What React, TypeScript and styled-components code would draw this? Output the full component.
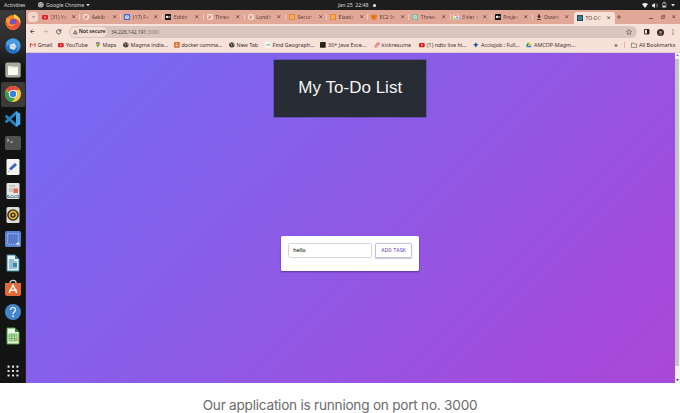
import React from "react";
import styled, { createGlobalStyle } from "styled-components";

const Global = createGlobalStyle`
  * { box-sizing: border-box; }
  body { margin: 0; background: #fff; overflow: hidden; font-family: "Noto Sans", "Open Sans", sans-serif; }
  svg { display: block; flex: none; overflow: visible; }
`;

const Figure = styled.div`
  width: 680px;
  height: 413px;
  display: flex;
  flex-direction: column;
`;
const Desktop = styled.div`
  height: 383px;
  display: flex;
  flex-direction: column;
  overflow: hidden;
`;
const SystemBar = styled.div`
  height: 10px;
  flex: none;
  display: grid;
  grid-template-columns: 334px 1fr auto;
  align-items: center;
  padding: 0 5px 0 4px;
  background: #1d1d1d;
  color: #d6d6d6;
  font-size: 5.3px;
  line-height: 10px;
  letter-spacing: -0.08px;
`;
const BarGroup = styled.div<{ $gap: number }>`
  display: flex;
  align-items: center;
  gap: ${(p) => p.$gap}px;
  white-space: pre;
`;
const AppName = styled(BarGroup)`
  margin-left: 11px;
`;
const Workspace = styled.div`
  flex: 1;
  min-height: 0;
  display: flex;
`;
const Dock = styled.div`
  width: 26px;
  flex: none;
  display: flex;
  flex-direction: column;
  background: linear-gradient(#3b3b3c 0, #2b2b2c 35px, #111212 60px, #141414 100%);
  border-right: 1px solid #242128;
`;
const DockItem = styled.div<{ $active?: boolean; $last?: boolean }>`
  height: 24.15px;
  flex: none;
  width: 24px;
  margin-left: 1px;
  margin-top: ${(p) => (p.$last ? 10.5 : 0)}px;
  display: flex;
  align-items: center;
  justify-content: center;
  border-radius: 2px;
  background: ${(p) => (p.$active ? "#3c3b3a" : "transparent")};
`;
const Browser = styled.div`
  flex: 1;
  min-width: 0;
  display: flex;
  flex-direction: column;
`;
const TabStrip = styled.div`
  height: 14px;
  flex: none;
  display: flex;
  align-items: center;
  background: #e1a797;
  padding-left: 2px;
  color: #5b3f38;
`;
const TabSearch = styled.div`
  width: 10px;
  height: 10px;
  flex: none;
  border-radius: 3px;
  background: #f3d5ca;
  display: flex;
  align-items: center;
  justify-content: center;
  margin-right: 1.3px;
`;
const TabItem = styled.div<{ $active?: boolean }>`
  width: 41.15px;
  height: ${(p) => (p.$active ? "12px" : "14px")};
  align-self: flex-end;
  flex: none;
  display: flex;
  align-items: center;
  padding: 0 0 0 2.7px;
  padding-bottom: ${(p) => (p.$active ? 1 : 0)}px;
  border-radius: 3px 3px 0 0;
  background: ${(p) => (p.$active ? "#f7e2d9" : "transparent")};
`;
const TabTitle = styled.span`
  width: 21.2px;
  margin-left: 2.6px;
  flex: none;
  overflow: hidden;
  white-space: pre;
  font-size: 5.2px;
  line-height: 8px;
  -webkit-mask-image: linear-gradient(90deg, #000 50%, transparent 82%);
  mask-image: linear-gradient(90deg, #000 50%, transparent 82%);
`;
const TabDivider = styled.i`
  width: 0.8px;
  height: 6px;
  margin-left: auto;
  margin-right: 0.3px;
  background: #f0cabf;
`;
const WindowControls = styled.div`
  flex: 1;
  display: flex;
  align-items: center;
  justify-content: space-between;
  padding: 0 4.5px 0 2.2px;
`;
const ControlGroup = styled.div`
  display: flex;
  align-items: center;
  gap: 7.5px;
`;
const Toolbar = styled.div`
  height: 15px;
  flex: none;
  display: flex;
  align-items: center;
  padding: 1px 5px 0 4px;
  background: #f7e2d9;
`;
const NavButtons = styled.div`
  display: flex;
  gap: 8px;
  width: 39px;
`;
const Omnibox = styled.div`
  width: 568px;
  height: 11.6px;
  border-radius: 6px;
  background: #d8c6be;
  display: flex;
  align-items: center;
  padding: 0 5px 0 1px;
  color: #554a46;
  font-size: 5.3px;
  line-height: 9px;
  letter-spacing: -0.16px;
`;
const SecurityChip = styled.div`
  width: 37px;
  height: 9.4px;
  border-radius: 5px;
  background: #f2ded5;
  display: flex;
  align-items: center;
  gap: 1.7px;
  padding-left: 2.5px;
  margin-right: 3.9px;
  color: #2c2523;
  font-weight: 600;
  font-size: 5.2px;
  letter-spacing: -0.08px;
  white-space: nowrap;
`;
const Port = styled.span`
  color: #8f807a;
  flex: 1;
`;
const ToolbarActions = styled.div`
  flex: 1;
  display: flex;
  align-items: center;
  justify-content: space-between;
  padding: 0 1px 0 7px;
`;
const Bookmarks = styled.div`
  height: 13.5px;
  flex: none;
  display: flex;
  align-items: center;
  padding: 0 5px 0 4px;
  background: #f7e2d9;
  border-bottom: 0.8px solid #dccbd0;
  color: #3a302d;
  font-size: 5.4px;
  line-height: 9px;
`;
const Bookmark = styled.div<{ $width: number; $track?: number }>`
  width: ${(p) => p.$width}px;
  flex: none;
  display: flex;
  align-items: center;
  gap: 2px;
  white-space: pre;
  letter-spacing: ${(p) => p.$track ?? 0}px;
`;
const BookmarkTail = styled.div`
  flex: 1;
  display: flex;
  align-items: center;
  justify-content: space-between;
  white-space: nowrap;
`;
const TailDivider = styled.i`
  width: 0.8px;
  height: 6px;
  background: #e3b3a6;
`;
const Viewport = styled.div`
  flex: 1;
  min-height: 0;
  display: flex;
`;
const TodoPage = styled.main`
  width: 648.5px;
  flex: none;
  display: flex;
  flex-direction: column;
  align-items: center;
  background: linear-gradient(135deg, #786bf5 0%, #7b66f0 15%, #8f59e5 52%, #a54adb 88%, #a948d8 100%);
`;
const Heading = styled.h1`
  width: 152px;
  height: 57.2px;
  margin: 7.2px 0 0;
  display: flex;
  align-items: center;
  justify-content: center;
  background: #282c34;
  box-shadow: 0 0 0 0.5px #4d4085;
  color: #f4f4f4;
  font: 400 17px/20px "Liberation Sans", Arial, sans-serif;
  letter-spacing: 0.02px;
`;
const TaskCard = styled.section`
  width: 138px;
  height: 35px;
  margin-top: 119px;
  padding: 7px 7px 0;
  display: flex;
  align-items: flex-start;
  gap: 3.5px;
  background: #fff;
  border-radius: 1.6px;
  box-shadow: 0 1px 2px rgba(50, 20, 90, 0.55);
`;
const TaskInput = styled.div`
  width: 83.5px;
  height: 14.8px;
  border: 0.8px solid #d6d6da;
  border-radius: 1.8px;
  padding-left: 4px;
  color: #222;
  font-size: 5.3px;
  font-weight: 500;
  line-height: 13px;
  letter-spacing: -0.05px;
`;
const AddButton = styled.button`
  flex: 1;
  height: 14.8px;
  padding: 0;
  border: 0.8px solid #c8bddd;
  border-radius: 1.5px;
  background: #fff;
  box-shadow: 0 0.5px 1.2px #cbc6d6;
  color: #6a3fb8;
  font: 400 5.1px/13px Roboto, sans-serif;
  letter-spacing: 0.17px;
`;
const ScrollTrack = styled.div`
  flex: 1;
  display: flex;
  flex-direction: column;
  align-items: center;
  justify-content: space-between;
  background: #f4f3f4;
  padding: 1.8px 0;
`;
const ScrollThumb = styled.div`
  width: 4px;
  height: 307px;
  margin-bottom: 10px;
  background: #c4c2c4;
`;
const Caption = styled.p`
  margin: 0;
  padding-top: 11.5px;
  height: 30px;
  text-align: center;
  color: #6b6b6b;
  white-space: nowrap;
  font: 400 13.6px/20px Inter, sans-serif;
  letter-spacing: -0.23px;
`;

type IconName =
  | "youtube" | "github" | "calendar" | "medium" | "aws" | "ec2" | "gpt" | "google"
  | "download" | "react" | "gmail" | "maps" | "globe" | "docker" | "find" | "java"
  | "kick" | "accio" | "drive" | "folder";

function SmallIcon({ name, size = 6 }: { name: IconName; size?: number }) {
  const art: Record<IconName, React.ReactNode> = {
    youtube: <><rect x="0" y="2" width="12" height="9" rx="2" fill="#df1f22" /><path d="m5 4.5 3.5 2L5 8.5z" fill="#fff" /></>,
    github: <><circle cx="6" cy="6" r="6" fill="#faeae5" /><path d="M3 4 2.8 2 5 3h2l2.2-1L9 4c1 3-.5 4-2 4.2v3H5V10c-1.2.3-2-.2-2.5-1M5 8.2C3 7.8 2 6.5 3 4" fill="#d69b8c" /></>,
    calendar: <><rect width="12" height="12" rx="1.5" fill="#356bd2" /><path d="M2.5 3h7v6.5h-7z" fill="#fff" /><path d="M4 5h4M4 7.5h3" stroke="#356bd2" /></>,
    medium: <><rect width="12" height="12" rx="1" fill="#171717" /><ellipse cx="4" cy="6" rx="2.2" ry="2.3" fill="#fff" /><ellipse cx="8" cy="6" rx="1.1" ry="2.2" fill="#fff" /><path d="M10.3 4v4" stroke="#fff" strokeWidth=".7" /></>,
    aws: <><rect width="12" height="12" rx="1" fill="#ed8321" /><path d="M3 3h6v6H3zM3 6h6M6 3v6" fill="none" stroke="#ffd9a5" /></>,
    ec2: <><path d="m6 0 6 3v6l-6 3-6-3V3z" fill="#ef8120" /><path d="m0 3 6 3 6-3M6 6v6" fill="none" stroke="#c45c0b" /></>,
    gpt: <><rect width="12" height="12" rx="2" fill="#7db8a5" /><path d="m6 2 3.5 2v4L6 10 2.5 8V4zM6 2v4l3.5 2M6 6 2.5 8" fill="none" stroke="#eefaf5" /></>,
    google: <><circle cx="6" cy="6" r="6" fill="#fff" /><path d="M9.3 3.2A4.2 4.2 0 0 0 2.5 4" fill="none" stroke="#e54335" strokeWidth="2" /><path d="M2.4 4a4 4 0 0 0 0 4" fill="none" stroke="#f6bb23" strokeWidth="2" /><path d="M2.4 8A4 4 0 0 0 9 9" fill="none" stroke="#34a853" strokeWidth="2" /><path d="M9 9a4 4 0 0 0 1.2-3H6" fill="none" stroke="#4285f4" strokeWidth="2" /></>,
    download: <path d="M4.3 1h3.4v4H10L6 9 2 5h2.3zM2 10h8v1.5H2z" fill="#302625" />,
    react: <><rect width="12" height="12" rx="1" fill="#233b48" /><g fill="none" stroke="#50bbd5" strokeWidth=".8"><ellipse cx="6" cy="6" rx="5" ry="2" /><ellipse cx="6" cy="6" rx="5" ry="2" transform="rotate(60 6 6)" /><ellipse cx="6" cy="6" rx="5" ry="2" transform="rotate(120 6 6)" /></g></>,
    gmail: <><path d="M1 10V3l5 4 5-4v7" fill="none" stroke="#d94336" strokeWidth="2" /><path d="M1 4v6.8" stroke="#a84857" strokeWidth="2" /></>,
    maps: <><path d="M6 12C5 8 2 7 2 4a4 4 0 0 1 8 0c0 3-3 4-4 8" fill="#34a853" /><path d="M2 4a4 4 0 0 1 4-4v4z" fill="#e94435" /><path d="M6 0a4 4 0 0 1 4 4H6z" fill="#4285f4" /><path d="M2 4h4L3.5 8C2.5 6.5 2 5.5 2 4" fill="#fbbc04" /><circle cx="6" cy="4" r="1.2" fill="#fff" /></>,
    globe: <><circle cx="6" cy="6" r="5.7" fill="#39342f" /><path d="M2 3c3 0 4 1 3 3s2 2 1 4M7 1c0 2 4 1 4 4L8 6" fill="none" stroke="#ecd9d1" strokeWidth="1.2" /></>,
    docker: <><rect width="12" height="12" rx="2" fill="#dc6828" /><path d="M3 3h4.5v2H3zM3 7h6v2H3z" fill="#fff" /></>,
    find: <><rect width="12" height="12" rx="2" fill="#fff9f3" /><path d="M2 6h7M7 3l3 3-3 2" fill="none" stroke="#34ac92" strokeWidth="1.5" /></>,
    java: <><rect width="12" height="12" rx="1" fill="#252016" /><path d="M3 9V3h5" fill="none" stroke="#4b442a" /></>,
    kick: <path d="M4 8 9 3c2 1 2 3 0 4L5 11c-3 1-4-1-3-3l5-6c2-1 4 0 4 2" fill="none" stroke="#dc4448" strokeWidth="1.6" />,
    accio: <path d="m6 0 2 4 4 2-4 2-2 4-2-4-4-2 4-2z" fill="#2550a5" />,
    drive: <><path d="M4 1h4l4 7H8z" fill="#f6bd22" /><path d="M4 1 0 8l2 3 4-7z" fill="#209b57" /><path d="M3.5 8H12l-2 3H2z" fill="#3978e8" /></>,
    folder: <path d="M1 2h4l1 2h5v7H1z" fill="none" stroke="#493e39" />,
  };
  return <svg width={size} height={size} viewBox="0 0 12 12">{art[name]}</svg>;
}

const tabs: [IconName, string][] = [
  ["youtube", "(31) Yo"], ["github", "Aakib ;"], ["calendar", "(17) Fe"], ["medium", "Editin"],
  ["github", "Three-"], ["github", "Londh"], ["aws", "Securi"], ["aws", "Elastic"],
  ["ec2", "EC2 In"], ["gpt", "Three-"], ["google", "3 tier a"], ["medium", "Projec"],
  ["download", "Downl"], ["react", "TO-DO"],
];

const bookmarks: [IconName, string, number, number][] = [
  ["gmail", "Gmail", 28.3, -0.04], ["youtube", "YouTube", 36.6, 0], ["maps", "Maps", 28, 0],
  ["globe", "Magma india...", 51, 0], ["docker", "docker comma...", 55, -0.1],
  ["globe", "New Tab", 36, 0], ["find", "Find Geograph...", 55.5, 0],
  ["java", "30+ Java Exce...", 53.4, 0], ["kick", "kickresume", 45.5, 0.08],
  ["youtube", "(1) ndtv live hi...", 54, 0], ["accio", "Acciojob : Full...", 53, 0],
  ["drive", "AMCOP-Magm...", 88, 0],
];

const Cross = () => (
  <svg width="3.4" height="3.4" viewBox="0 0 4 4"><path d="m.4.4 3.2 3.2m0-3.2L.4 3.6" stroke="#4c322c" strokeWidth=".9" /></svg>
);

const dockArt: React.ReactNode[] = [
  <><circle cx="8" cy="8.5" r="7.6" fill="#f68423" /><path d="M1 7c-1 8 11 12 14 3 1-4-1-7-4-9 1 3-1 4-3 4 3 2 2 6-1 6-3 0-4-2-6-4" fill="#f04b42" /><path d="M9 0c5 3 7 5 6 10-1-4-3-5-6-6z" fill="#ffd63b" /><circle cx="8" cy="8" r="3.3" fill="#7652be" /><path d="m1 4 5 1-2 4c2 2 5 2 7 0-2 5-8 4-9 0z" fill="#ff9c26" /></>,
  <><circle cx="8" cy="8" r="7.8" fill="#2470c5" /><path d="M1 5C4-1 12-1 15 5c1 4-1 7-4 9 3-5 1-9-3-9-3 0-5 2-6 4z" fill="#4b9de3" /><path d="M4.5 6.5 9 5l3 3.5-3 3.5-4-1.5z" fill="#dce7ef" /><path d="m4.5 6.5 4 2.4L12 8.5" fill="none" stroke="#8fb1d2" strokeWidth=".8" /></>,
  <><rect x=".3" y=".5" width="15.4" height="15" rx="2" fill="#aaa99c" /><path d="M3 4h4l1 1h5v8H3z" fill="#fbfaf2" /><path d="M3 5h10" stroke="#ddd9cd" /></>,
  <><circle cx="8" cy="8" r="8" fill="#f5c63b" /><path d="M8 8 1.1 4A8 8 0 0 1 15 4H8z" fill="#e34b3d" /><path d="M1.1 4A8 8 0 0 0 7 16l4-6-3-2-3 1z" fill="#379b54" /><circle cx="8" cy="8" r="4.1" fill="#fff" /><circle cx="8" cy="8" r="3.2" fill="#397ee0" /></>,
  <><path d="m11.5 1.5-10 9M1.5 5.5l10 9" stroke="#2583c4" strokeWidth="2.8" strokeLinecap="round" /><path d="m11 .5 4.3 2v11l-4.3 2z" fill="#45a4e4" /></>,
  <><rect y="1" width="16" height="14" rx="1.8" fill="#515151" /><path d="m2 4 2 1.3L2 6.5M5 7h3" fill="none" stroke="#ddd" strokeWidth=".8" /></>,
  <><rect x="1.5" y="0" width="13" height="16" rx="1.3" fill="#f4f4f1" /><path d="m5 10.5 6-5.5" stroke="#3b62c6" strokeWidth="3" /><circle cx="3.6" cy="12.5" r=".6" fill="#df6a62" /></>,
  <><rect x="1.5" y="0" width="13" height="16" rx="1.3" fill="#e7e4df" /><path d="M4 3h6M4 6h4M4 8h4" stroke="#aaa" /><path d="M8.5 5.5H13V10H8.5z" fill="#d96a61" /><path d="M2 12h12v3H2z" fill="#7d93ac" /><path d="m4 14 1-2 2 2 2-2 2 2 2-1" stroke="#dbe5ec" fill="none" /></>,
  <><rect x="1.5" y="0" width="13" height="16" rx="1.5" fill="#dedbd3" /><circle cx="8" cy="8" r="5.8" fill="#2e2c27" /><circle cx="8" cy="8" r="3.5" fill="none" stroke="#e9b528" strokeWidth="1.8" /><circle cx="8" cy="8" r="1.2" fill="#e9b528" /></>,
  <><rect width="16" height="16" rx="1.5" fill="#5b81d4" /><path d="M2.7 2.7h10.6v10.6H2.7z" fill="#5679c9" stroke="#c8d8f7" strokeWidth=".8" strokeDasharray="1.3 1" /><path d="M13 11v3.6m-1.8-1.8h3.6" stroke="#e6edda" /></>,
  <><path d="M2 0h8l4 4v12H2z" fill="#e8f2f5" stroke="#3387a8" /><path d="M10 0v4h4z" fill="#287c9c" /><path d="M4 5h5M4 7h8M4 9h4M4 11h8M4 13h8" stroke="#4589a8" /><path d="M8 8h4v4H8z" fill="#388ab4" /></>,
  <><path d="M5 4V2.5C5-.3 11-.3 11 2.5V4" fill="none" stroke="#d8d0c9" strokeWidth="1.2" /><path d="M0 3h16v11.5L14.5 16h-13L0 14.5z" fill="#e36838" /><path d="m4.2 13 3.8-8 3.8 8M4 10.3h8" fill="none" stroke="#fff4ea" strokeWidth="1.6" /></>,
  <><circle cx="8" cy="8" r="8" fill="#4386ce" /><path d="M5.5 6C5.5 2.5 10.7 2.8 10.5 6 10.4 7.6 8 8 8 10" fill="none" stroke="#f5f7fa" strokeWidth="1.2" /><circle cx="8" cy="12.2" r=".9" fill="#fff" /></>,
  <><path d="M2 0h8l4 4v12H2z" fill="#edf6e9" stroke="#449836" /><path d="M10 0v4h4z" fill="#277724" /><path d="M4 6h8v7H4zM4 8h8M4 10.5h8M6.7 6v7M9.4 6v7" fill="#d2ebc9" stroke="#5aaa4c" strokeWidth=".8" /><circle cx="11.5" cy="11.5" r="1.7" fill="#b9b86c" /></>,
  <g fill="#e0e0e0">{[2.1, 8, 13.9].flatMap((y) => [2.1, 8, 13.9].map((x) => <rect key={`${x}-${y}`} x={x - 1.4} y={y - 1.4} width="2.8" height="2.8" rx=".5" />))}</g>,
];

export default function App() {
  return (
    <Figure>
      <Global />
      <Desktop>
        <SystemBar>
          <BarGroup $gap={2}>
            <span>Activities</span>
            <AppName $gap={2.2}>
              <svg width="5.6" height="5.6" viewBox="0 0 12 12"><circle cx="6" cy="6" r="6" fill="#bbb" /><circle cx="6" cy="6" r="2.5" fill="#ddd" stroke="#555" /><path d="M6 3.5h5M4 7 1.5 3M8 7l-3 5" stroke="#666" /></svg>
              <span>Google Chrome</span>
              <svg width="4" height="2.3" viewBox="0 0 8 5"><path d="M0 0h8L4 5z" fill="#ddd" /></svg>
            </AppName>
          </BarGroup>
          <BarGroup $gap={4.5}>
            <span>Jan 25  22:48</span>
            <svg width="3" height="3" viewBox="0 0 4 4"><circle cx="2" cy="2" r="2" fill="#fff" /></svg>
          </BarGroup>
          <BarGroup $gap={4.2}>
            <svg width="6" height="5" viewBox="0 0 12 10"><path d="M0 2Q6-2 12 2L6 10z" fill="#eee" /></svg>
            <svg width="6" height="5" viewBox="0 0 12 10"><path d="M0 3h2l4-3v10L2 7H0z" fill="#eee" /><path d="M8 2q2 3 0 6M10 1q3 4 0 8" fill="none" stroke="#aaa" /></svg>
            <svg width="4.5" height="6" viewBox="0 0 9 12"><path d="M1 2h7v9H1zM3 0h3v2H3z" fill="none" stroke="#ccc" /><path d="M2 7h5v3H2z" fill="#ddd" /></svg>
            <svg width="4" height="2.4" viewBox="0 0 8 5"><path d="M0 0h8L4 5z" fill="#ddd" /></svg>
          </BarGroup>
        </SystemBar>
        <Workspace>
          <Dock>
            {dockArt.map((art, i) => (
              <DockItem key={i} $active={i === 3} $last={i === 14}>
                <svg width={i === 14 ? 12 : 16} height={i === 14 ? 12 : 16} viewBox="0 0 16 16">
                  {art}
                  {(i === 3 || i === 13) && <circle cx="-10.2" cy="8" r=".9" fill="#e7562c" />}
                </svg>
              </DockItem>
            ))}
          </Dock>
          <Browser>
            <TabStrip>
              <TabSearch><svg width="3" height="2" viewBox="0 0 6 4"><path d="m.5.5 2.5 2.5L5.5.5" fill="none" stroke="#48332e" strokeWidth="1.4" /></svg></TabSearch>
              {tabs.map(([icon, title], i) => (
                <TabItem key={i} $active={i === 13}>
                  <SmallIcon name={icon} /><TabTitle>{title}</TabTitle><Cross />
                  {i < 12 && <TabDivider />}
                </TabItem>
              ))}
              <WindowControls>
                <svg width="4" height="4" viewBox="0 0 4 4"><path d="M2 0v4M0 2h4" stroke="#5e4038" strokeWidth=".7" /></svg>
                <ControlGroup>
                  <svg width="4" height="4" viewBox="0 0 4 4"><path d="M0 3.5h4" stroke="#5e4038" strokeWidth=".8" /></svg>
                  <svg width="4" height="4" viewBox="0 0 4 4"><path d="M.3 1.3h2.5v2.4H.3zM1.3 1V.3h2.4v2.4H3" fill="none" stroke="#5e4038" strokeWidth=".6" /></svg>
                  <Cross />
                </ControlGroup>
              </WindowControls>
            </TabStrip>
            <Toolbar>
              <NavButtons>
                <svg width="5" height="5" viewBox="0 0 10 10"><path d="M9 5H1m4-4L1 5l4 4" fill="none" stroke="#40322e" strokeWidth="1.5" /></svg>
                <svg width="5" height="5" viewBox="0 0 10 10"><path d="M1 5h8M5 1l4 4-4 4" fill="none" stroke="#b9a49d" strokeWidth="1.3" /></svg>
                <svg width="5.4" height="5.4" viewBox="0 0 10 10"><path d="M8.5 3A4 4 0 1 0 9 6M9 .5V4H5.5" fill="none" stroke="#40322e" strokeWidth="1.5" /></svg>
              </NavButtons>
              <Omnibox>
                <SecurityChip>
                  <svg width="4.6" height="4.4" viewBox="0 0 10 9"><path d="m5 .8 4 7.4H1zM5 3.5v2M5 6.3v1" fill="none" stroke="#332b28" strokeWidth="1.3" /></svg>
                  Not secure
                </SecurityChip>
                34.228.142.191<Port>:3000</Port>
                <svg width="6" height="6" viewBox="0 0 12 12"><path d="m6 .8 1.6 3.4 3.8.4-2.8 2.6.8 3.7L6 9l-3.4 1.9.8-3.7L.6 4.6l3.8-.4z" fill="none" stroke="#50443f" strokeWidth="1.1" /></svg>
              </Omnibox>
              <ToolbarActions>
                <svg width="5.5" height="5.5" viewBox="0 0 11 11"><path d="M1 1h9v9H1z" fill="none" stroke="#211b19" strokeWidth="1.7" /><path d="M6 1h4v9H6z" fill="#211b19" /></svg>
                <svg width="7" height="7" viewBox="0 0 14 14"><circle cx="7" cy="7" r="7" fill="#352d2d" /><circle cx="7" cy="6.4" r="3" fill="#b87767" /><path d="M3 12q4-4 8 0-4 3-8 0" fill="#8e4540" /></svg>
                <svg width="2" height="6" viewBox="0 0 2 6"><g fill="#51443f"><circle cx="1" cy=".8" r=".6" /><circle cx="1" cy="3" r=".6" /><circle cx="1" cy="5.2" r=".6" /></g></svg>
              </ToolbarActions>
            </Toolbar>
            <Bookmarks>
              {bookmarks.map(([icon, title, width, track]) => (
                <Bookmark key={title} $width={width} $track={track}><SmallIcon name={icon} size={5.7} /><span>{title}</span></Bookmark>
              ))}
              <BookmarkTail>
                <b>»</b><TailDivider />
                <Bookmark $width={44}><SmallIcon name="folder" /><span>All Bookmarks</span></Bookmark>
              </BookmarkTail>
            </Bookmarks>
            <Viewport>
              <TodoPage>
                <Heading>My To-Do List</Heading>
                <TaskCard><TaskInput>hello</TaskInput><AddButton>ADD TASK</AddButton></TaskCard>
              </TodoPage>
              <ScrollTrack>
                <svg width="3" height="2" viewBox="0 0 6 4"><path d="M0 4h6L3 0z" fill="#888" /></svg>
                <ScrollThumb />
                <svg width="3" height="2" viewBox="0 0 6 4"><path d="M0 0h6L3 4z" fill="#444" /></svg>
              </ScrollTrack>
            </Viewport>
          </Browser>
        </Workspace>
      </Desktop>
      <Caption>Our application is runniong on port no. 3000</Caption>
    </Figure>
  );
}
